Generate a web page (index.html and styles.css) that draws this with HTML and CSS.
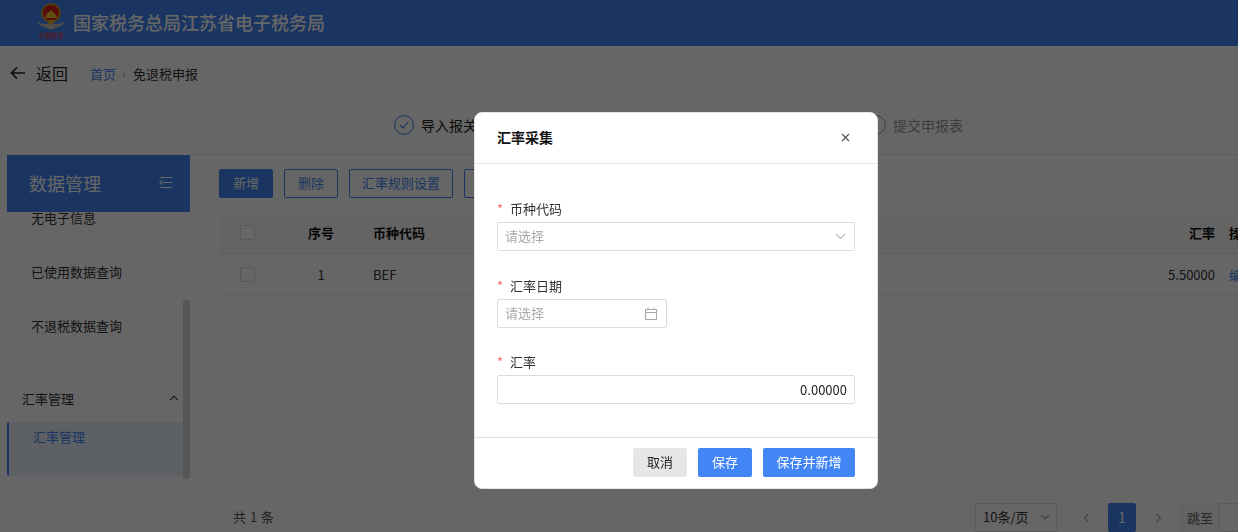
FILE: index.html
```html
<!DOCTYPE html>
<html lang="zh-CN">
<head>
<meta charset="utf-8">
<title>汇率采集</title>
<link rel="stylesheet" href="styles.css">
</head>
<body>
<div class="page">
  <header class="topbar">
    <div class="logo">
      <svg width="28" height="28" viewBox="0 0 28 28">
        <path d="M0 19c3 5 9 5 14 8 5-3 11-3 14-8-3 1-6 2-8 2H8c-2 0-5-1-8-2z" fill="#c4c0b2"/>
        <circle cx="14" cy="10" r="10" fill="#c99a2c"/>
        <circle cx="14" cy="10" r="8" fill="#d9231d"/>
        <path d="M8 15h12l-1-3-5-5-5 5z" fill="#f2c230"/>
        <rect x="11" y="17" width="6" height="4" fill="#d8ad32"/>
      </svg>
      <span class="logo-text">中国税务</span>
    </div>
    <h1 class="site-title">国家税务总局江苏省电子税务局</h1>
  </header>

  <nav class="crumbs">
    <svg class="back-icon" width="16" height="14" viewBox="0 0 16 14"><path d="M15 7H2M7 1.500 1.500 7 7 12.500" fill="none" stroke="#222" stroke-width="1.700"/></svg>
    <span class="back">返回</span>
    <a class="crumb-link">首页</a>
    <span class="crumb-sep">›</span>
    <span class="crumb-now">免退税申报</span>
  </nav>

  <div class="steps">
    <div class="step step-first">
      <svg width="20" height="20" viewBox="0 0 20 20"><circle cx="10" cy="10" r="9.400" fill="none" stroke="#4285f4"/><path d="M6 10.200l3 2.800 5-5.600" fill="none" stroke="#4285f4" stroke-width="1.200"/></svg>
      <span>导入报关单</span>
    </div>
    <div class="step step-last">
      <svg width="20" height="20" viewBox="0 0 20 20"><circle cx="10" cy="10" r="9.400" fill="none" stroke="#999"/></svg>
      <span>提交申报表</span>
    </div>
  </div>

  <div class="workspace">
    <aside class="sidebar">
      <div class="side-title">
        <span>数据管理</span>
        <svg width="14" height="13" viewBox="0 0 14 13"><path d="M1 1.500h12.500M4 6.500h9.500M1 11.500h12.500M3.500 4.500l-2.500 2 2.500 2" fill="none" stroke="#fff" stroke-width="1.200"/></svg>
      </div>
      <ul class="menu">
        <li class="menu-item">无电子信息</li>
        <li class="menu-item">已使用数据查询</li>
        <li class="menu-item">不退税数据查询</li>
        <li class="menu-group">
          <span>汇率管理</span>
          <svg width="10" height="6" viewBox="0 0 10 6"><path d="M1 5.200 5 1.200l4 4" fill="none" stroke="#333" stroke-width="1.100"/></svg>
        </li>
        <li class="menu-active">汇率管理</li>
      </ul>
      <div class="scrollbar"></div>
    </aside>

    <main class="content">
      <div class="toolbar">
        <button class="btn btn-primary">新增</button>
        <button class="btn btn-outline">删除</button>
        <button class="btn btn-outline btn-wide">汇率规则设置</button>
        <button class="btn btn-outline">导入</button>
      </div>
      <div class="table">
        <div class="row row-head">
          <div class="cell-check"><span class="checkbox"></span></div>
          <div class="cell-seq">序号</div>
          <div class="cell-code">币种代码</div>
          <div class="cell-rate">汇率</div>
          <div class="cell-op">操作</div>
        </div>
        <div class="row">
          <div class="cell-check"><span class="checkbox"></span></div>
          <div class="cell-seq">1</div>
          <div class="cell-code">BEF</div>
          <div class="cell-rate">5.50000</div>
          <div class="cell-op link">编辑</div>
        </div>
      </div>
      <div class="pager">
        <span class="total">共 1 条</span>
        <div class="page-size">
          <span>10条/页</span>
          <svg width="10" height="6" viewBox="0 0 10 6"><path d="M1 1l4 4 4-4" fill="none" stroke="#999" stroke-width="1.100"/></svg>
        </div>
        <svg class="pg-arrow pg-prev" width="7" height="10" viewBox="0 0 7 10"><path d="M5.500 1 1.500 5l4 4" fill="none" stroke="#aaa" stroke-width="1.200"/></svg>
        <span class="pg-num">1</span>
        <svg class="pg-arrow pg-next" width="7" height="10" viewBox="0 0 7 10"><path d="M1.500 1l4 4-4 4" fill="none" stroke="#aaa" stroke-width="1.200"/></svg>
        <div class="jump"><span>跳至</span><span class="jump-input"></span></div>
      </div>
    </main>
  </div>
</div>

<div class="overlay">
  <section class="dialog">
    <div class="dialog-head">
      <h2>汇率采集</h2>
      <svg width="9" height="9" viewBox="0 0 9 9"><path d="M1 1l7 7M8 1 1 8" fill="none" stroke="#555" stroke-width="1.200"/></svg>
    </div>
    <div class="dialog-body">
      <div class="field">
        <label class="field-label"><i>*</i>币种代码</label>
        <div class="input"><span class="placeholder">请选择</span>
          <svg width="11" height="7" viewBox="0 0 11 7"><path d="M1 1l4.500 4.500L10 1" fill="none" stroke="#bbb" stroke-width="1.100"/></svg>
        </div>
      </div>
      <div class="field">
        <label class="field-label"><i>*</i>汇率日期</label>
        <div class="input input-date"><span class="placeholder">请选择</span>
          <svg width="14" height="13" viewBox="0 0 14 13"><path d="M1.500 2.500h11v10h-11zM1.500 5.500h11M4 .5v2M10 .5v2" fill="none" stroke="#aaa" stroke-width="1.100"/></svg>
        </div>
      </div>
      <div class="field field-tight">
        <label class="field-label"><i>*</i>汇率</label>
        <div class="input input-num"><span>0.00000</span></div>
      </div>
    </div>
    <div class="dialog-foot">
      <button class="dbtn dbtn-cancel">取消</button>
      <button class="dbtn dbtn-save">保存</button>
      <button class="dbtn dbtn-save dbtn-wide">保存并新增</button>
    </div>
  </section>
</div>
</body>
</html>
```

FILE: styles.css
```css
* { box-sizing: border-box; }
html, body { margin: 0; padding: 0; height: 532px; overflow: hidden; }
body {
  font-family: "Noto Sans CJK SC", "Liberation Sans", sans-serif;
  font-size: 13px;
  color: #333;
  background: #fff;
}
ul { list-style: none; margin: 0; padding: 0; }
h1, h2 { margin: 0; font-weight: normal; }
button { font: inherit; cursor: pointer; }

.page { height: 532px; display: flex; flex-direction: column; }

.topbar {
  height: 46px;
  flex: none;
  background: #4285f4;
  display: flex;
  align-items: center;
  padding-left: 37px;
}
.logo { width: 28px; height: 46px; display: flex; flex-direction: column; align-items: center; margin-right: 8px; padding-top: 3px; }
.logo svg { flex: none; }
.logo-text { font-size: 6.500px; line-height: 9px; color: #e33; white-space: nowrap; }
.site-title { font-size: 18px; line-height: 46px; color: #fff; font-weight: 500; padding-bottom: 2px; }

.crumbs { height: 56px; flex: none; display: flex; align-items: center; padding: 0 0 2px 10px; }
.back-icon { margin-right: 10px; }
.back { font-size: 16px; color: #222; margin-right: 22px; }
.crumb-link { color: #4285f4; }
.crumb-sep { color: #aaa; margin: 0 7px 0 6px; }
.crumb-now { color: #333; }

.steps { height: 52px; flex: none; display: flex; align-items: center; padding: 0 0 6px 394px; font-size: 14px; color: #222; }
.step { display: flex; align-items: center; gap: 7px; white-space: nowrap; }
.step-first { width: 472px; }
.step-last { color: #999; }

.workspace { flex: 1; display: flex; min-height: 0; }

.sidebar { width: 183px; flex: none; margin-left: 7px; position: relative; display: flex; flex-direction: column; margin-top: 1px; }
.side-title {
  height: 57px;
  flex: none;
  background: #4285f4;
  color: #fff;
  font-size: 18px;
  display: flex;
  align-items: center;
  justify-content: space-between;
  padding: 0 17px 2px 22px;
  position: relative;
  z-index: 1;
}
.menu { margin-top: -21px; }
.menu-item { height: 54px; line-height: 54px; padding-left: 24px; color: #333; }
.menu-group {
  height: 46px;
  margin-top: 23px;
  display: flex;
  align-items: center;
  justify-content: space-between;
  padding: 0 11px 2px 15px;
  color: #333;
}
.menu-active {
  height: 54px;
  width: 176px;
  background: #e8f1fb;
  border-left: 2px solid #4285f4;
  border-radius: 2px;
  color: #4285f4;
  padding: 5px 0 0 24px;
  line-height: 20px;
}
.scrollbar { position: absolute; right: 0; top: 145px; width: 7px; height: 179px; background: #d5d5d5; border-radius: 3px; }

.content {
  flex: 1;
  min-width: 0;
  border-top: 1px solid #e6e6e6;
  padding: 14px 0 0 29px;
  display: flex;
  flex-direction: column;
  overflow: hidden;
}
.toolbar { display: flex; gap: 11px; height: 29px; flex: none; }
.btn { height: 29px; width: 54px; padding: 0 0 2px; border-radius: 2px; border: 1px solid #4285f4; }
.btn-primary { background: #4285f4; color: #fff; }
.btn-outline { background: #fff; color: #4285f4; }
.btn-wide { width: 104px; }

.table { width: 1056px; flex: none; margin-top: 14px; }
.row {
  display: grid;
  grid-template-columns: 72px 60px 200px 664px 60px;
  align-items: center;
  height: 41px;
  border-bottom: 1px solid #e6e6e6;
  color: #333;
}
.row-head { height: 42px; background: #fafafa; color: #111; font-weight: 700; }
.cell-check { padding-left: 21px; display: flex; }
.checkbox { width: 15px; height: 15px; border: 1px solid #ddd; border-radius: 2px; background: #fff; }
.cell-seq { text-align: center; }
.cell-code { padding-left: 22px; }
.cell-rate { text-align: right; }
.cell-op { padding-left: 14px; white-space: nowrap; }
.link { color: #4285f4; }

.pager { margin-top: auto; height: 29px; flex: none; display: flex; align-items: center; position: relative; }
.total { padding: 0 0 3px 14px; color: #555; width: 756px; word-spacing: 1px; flex: none; }
.page-size {
  width: 82px;
  height: 29px;
  flex: none;
  border: 1px solid #e0e0e0;
  border-radius: 2px;
  display: flex;
  align-items: center;
  justify-content: space-between;
  padding: 0 6px 2px 7px;
}
.pg-arrow { flex: none; }
.pg-prev { margin-left: 26px; }
.pg-num {
  width: 28px;
  height: 29px;
  flex: none;
  margin-left: 18px;
  border-radius: 2px;
  background: #4285f4;
  color: #fff;
  font-size: 14px;
  line-height: 29px;
  text-align: center;
}
.pg-next { margin-left: 19px; }
.jump { margin-left: 18px; display: flex; align-items: center; background: #f8f8f8; flex: none; padding-left: 7px; gap: 6px; color: #666; }
.jump-input { width: 40px; height: 29px; border: 1px solid #e0e0e0; border-radius: 2px; background: #fff; }

.overlay {
  position: fixed;
  inset: 0;
  z-index: 10;
  background: rgba(0, 0, 0, 0.6);
  padding: 112px 0 0 474px;
}
.dialog {
  width: 404px;
  height: 377px;
  background: #fff;
  border: 1px solid #e4e4e4;
  border-radius: 8px;
  display: flex;
  flex-direction: column;
}
.dialog-head {
  height: 51px;
  flex: none;
  border-bottom: 1px solid #e0e0e0;
  display: flex;
  align-items: center;
  justify-content: space-between;
  padding: 0 27px 2px 22px;
}
.dialog-head h2 { font-size: 14px; font-weight: 700; color: #111; }
.dialog-body { flex: 1; padding: 35px 22px 0; display: flex; flex-direction: column; gap: 25px; }
.field-tight { margin-top: -1px; }
.field-label { display: block; height: 20px; line-height: 20px; margin-bottom: 3px; color: #333; }
.field-label i { font-style: normal; color: #f56c6c; display: inline-block; width: 13px; }
.input {
  height: 29px;
  border: 1px solid #dcdcdc;
  border-radius: 2px;
  display: flex;
  align-items: center;
  justify-content: space-between;
  padding: 0 8px 0 7px;
}
.placeholder { padding-bottom: 2px; color: #aaa; }
.input-date { width: 170px; padding-right: 8px; }
.input-num { justify-content: flex-end; color: #222; padding-right: 7px; }
.dialog-foot {
  height: 51px;
  flex: none;
  border-top: 1px solid #e0e0e0;
  display: flex;
  justify-content: flex-end;
  gap: 11px;
  padding: 10px 22px 0 0;
}
.dbtn { height: 29px; width: 54px; padding: 0 0 2px; border: 0; border-radius: 2px; }
.dbtn-cancel { background: #e6e6e6; color: #222; }
.dbtn-save { background: #4285f4; color: #fff; }
.dbtn-wide { width: 92px; }
```
